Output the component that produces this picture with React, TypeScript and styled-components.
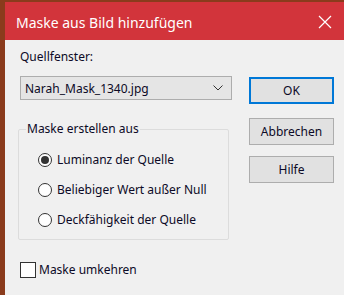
import { createGlobalStyle, styled } from "styled-components";

const GlobalStyle = createGlobalStyle`
  html, body {
    margin: 0;
    padding: 0;
    background: #f0f0f0;
  }
  body {
    font-family: "Noto Sans", "Open Sans", sans-serif;
    font-size: 12px;
    color: #0c0a26;
  }
`;

const options = [
  { label: "Luminanz der Quelle", checked: true },
  { label: "Beliebiger Wert außer Null", checked: false },
  { label: "Deckfähigkeit der Quelle", checked: false },
];

const App = () => {
  return (
    <>
      <GlobalStyle />
      <Frame>
        <TitleBar>
          <TitleText>Maske aus Bild hinzufügen</TitleText>
          <CloseIcon width="14" height="14" viewBox="0 0 14 14">
            <path d="M1 1 L13 13 M13 1 L1 13" stroke="#fff" strokeWidth="1.2" />
          </CloseIcon>
        </TitleBar>
        <Client>
          <MainRow>
            <LeftColumn>
              <FieldLabel>Quellfenster:</FieldLabel>
              <Select>
                <span>Narah_Mask_1340.jpg</span>
                <svg width="10" height="6" viewBox="0 0 10 6">
                  <path d="M0.5 0.5 L5 5 L9.5 0.5" fill="none" stroke="#333" strokeWidth="1" />
                </svg>
              </Select>
              <Group>
                <Legend>Maske erstellen aus</Legend>
                {options.map((o) => (
                  <RadioRow key={o.label}>
                    <RadioCircle $checked={o.checked} />
                    <span>{o.label}</span>
                  </RadioRow>
                ))}
              </Group>
            </LeftColumn>
            <ButtonColumn>
              <Button $primary>OK</Button>
              <Button>Abbrechen</Button>
              <Button>Hilfe</Button>
            </ButtonColumn>
          </MainRow>
          <CheckRow>
            <CheckBox />
            <span>Maske umkehren</span>
          </CheckRow>
        </Client>
      </Frame>
    </>
  );
};

export default App;

const Frame = styled.div`
  width: 344px;
  height: 295px;
  box-sizing: border-box;
  border-top: 2px solid #8a3b1c;
  border-left: 5px solid #8a3b1c;
  display: flex;
  flex-direction: column;
  overflow: hidden;
`;

const TitleBar = styled.div`
  height: 38px;
  flex-shrink: 0;
  background: #d2343b;
  display: flex;
  align-items: center;
  justify-content: space-between;
  padding: 0 12px 0 11px;
`;

const TitleText = styled.div`
  color: #fff;
  font-size: 14px;
  margin-top: 2px;
`;

const CloseIcon = styled.svg`
  margin-top: 2px;
`;

const Client = styled.div`
  flex: 1;
  background: #f0f0f0;
  padding: 9px 0 0 15px;
  display: flex;
  flex-direction: column;
`;

const MainRow = styled.div`
  display: flex;
  gap: 17px;
`;

const LeftColumn = styled.div`
  width: 212px;
  display: flex;
  flex-direction: column;
`;

const FieldLabel = styled.div`
  line-height: 16px;
  margin-bottom: 11px;
`;

const Select = styled.div`
  height: 24px;
  box-sizing: border-box;
  border: 1px solid #adadad;
  background: #e5e5e5;
  display: flex;
  align-items: center;
  justify-content: space-between;
  padding: 0 8px 0 4px;
`;

const Group = styled.fieldset`
  margin: 21px 3px 0 -2px;
  padding: 14px 0 8px 19px;
  border: 1px solid #dcdcdc;
  border-radius: 2px;
  height: 119px;
  box-sizing: border-box;
  display: flex;
  flex-direction: column;
  gap: 13px;
`;

const Legend = styled.legend`
  padding: 0 1px;
  margin-left: -12px;
  line-height: 16px;
`;

const RadioRow = styled.div`
  display: flex;
  align-items: center;
  gap: 5px;
  line-height: 17px;
`;

const RadioCircle = styled.span<{ $checked?: boolean }>`
  width: 14px;
  height: 14px;
  box-sizing: border-box;
  border-radius: 50%;
  border: 1px solid #333;
  background: #fff;
  display: flex;
  align-items: center;
  justify-content: center;
  &::after {
    content: "";
    width: 8px;
    height: 8px;
    border-radius: 50%;
    background: #333;
    display: ${({ $checked }) => ($checked ? "block" : "none")};
  }
`;

const ButtonColumn = styled.div`
  display: flex;
  flex-direction: column;
  gap: 11px;
  padding-top: 28px;
`;

const Button = styled.div<{ $primary?: boolean }>`
  width: 85px;
  height: 27px;
  box-sizing: border-box;
  background: #e1e1e1;
  border: ${({ $primary }) => ($primary ? "2px solid #0078d7" : "1px solid #adadad")};
  margin-bottom: ${({ $primary }) => ($primary ? "3px" : "0")};
  display: flex;
  align-items: center;
  justify-content: center;
`;

const CheckRow = styled.div`
  display: flex;
  align-items: center;
  gap: 3px;
  margin-top: 21px;
`;

const CheckBox = styled.span`
  width: 16px;
  height: 16px;
  box-sizing: border-box;
  border: 1px solid #333;
  background: #fff;
`;
